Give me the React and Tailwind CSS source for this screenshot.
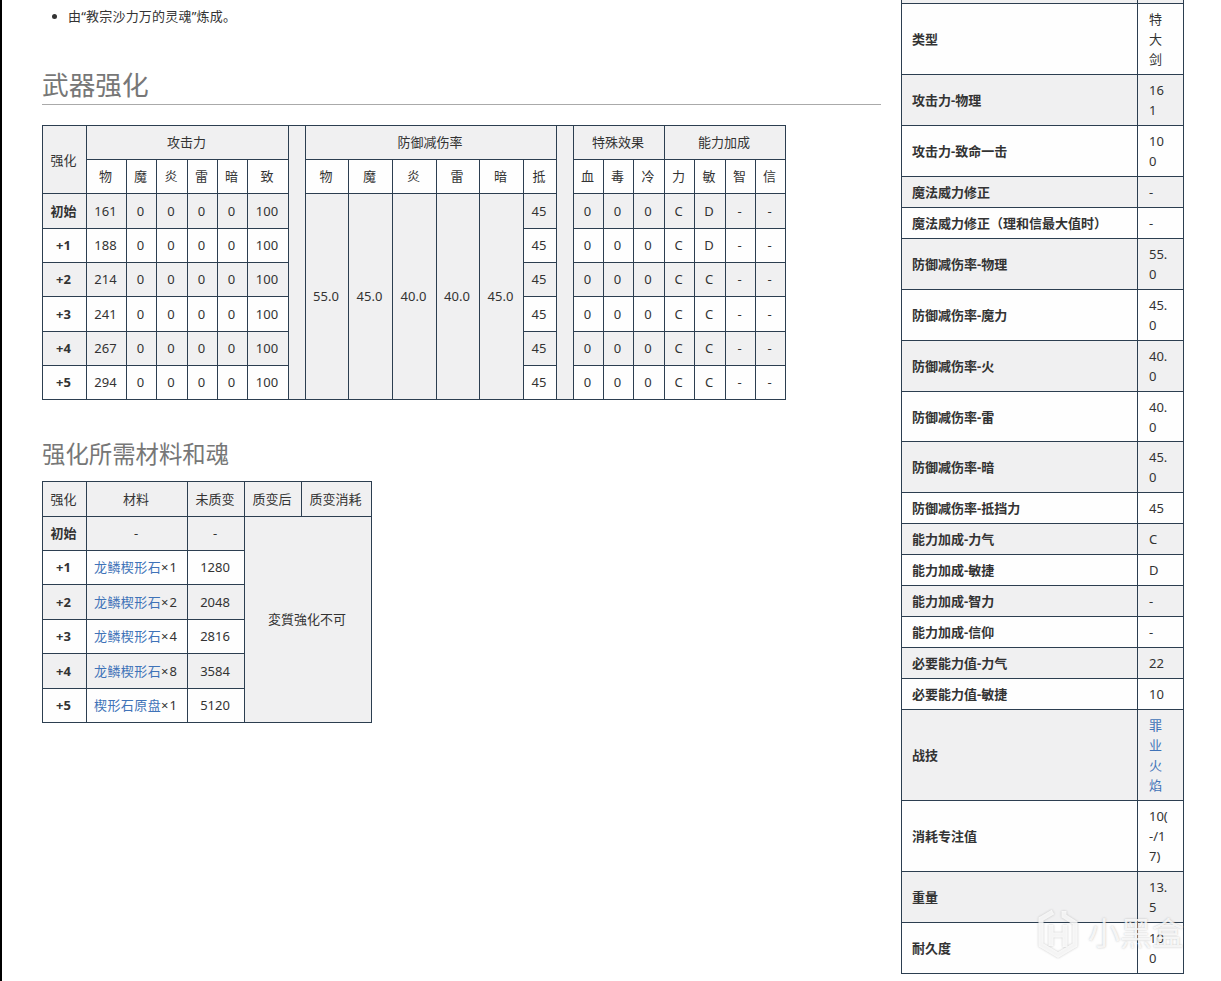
const font = '"Noto Sans", "Noto Sans CJK SC", sans-serif'

const cell = 'border border-[#2c3e50] text-center align-middle pt-0 pl-0 pr-[2px]'
const dataCell = `${cell} pb-px`
const gray = 'bg-[#f0f0f1]'
const white = 'bg-[#fefefe]'

const mainCols = [44, 40, 30, 31, 30, 30, 41, 17, 43, 44, 44, 43, 44, 33, 17, 30, 30, 31, 30, 31, 30, 30]

const upgradeRows = [
  ['初始', 161, 'C', 'D', 'h-[35px]'],
  ['+1', 188, 'C', 'D', 'h-[34px]'],
  ['+2', 214, 'C', 'C', 'h-[34px]'],
  ['+3', 241, 'C', 'C', 'h-[35px]'],
  ['+4', 267, 'C', 'C', 'h-[34px]'],
  ['+5', 294, 'C', 'C', 'h-[34px]'],
]

const materialRows = [
  ['初始', '-', '', '-', 'h-[34px]'],
  ['+1', '龙鳞楔形石', '×1', '1280', 'h-[34px]'],
  ['+2', '龙鳞楔形石', '×2', '2048', 'h-[35px]'],
  ['+3', '龙鳞楔形石', '×4', '2816', 'h-[34px]'],
  ['+4', '龙鳞楔形石', '×8', '3584', 'h-[35px]'],
  ['+5', '楔形石原盘', '×1', '5120', 'h-[34px]'],
]

const infoRows = [
  ['类型', '特大剑'],
  ['攻击力-物理', '161'],
  ['攻击力-致命一击', '100'],
  ['魔法威力修正', '-'],
  ['魔法威力修正（理和信最大值时）', '-'],
  ['防御减伤率-物理', '55.0'],
  ['防御减伤率-魔力', '45.0'],
  ['防御减伤率-火', '40.0'],
  ['防御减伤率-雷', '40.0', false, true],
  ['防御减伤率-暗', '45.0'],
  ['防御减伤率-抵挡力', '45'],
  ['能力加成-力气', 'C'],
  ['能力加成-敏捷', 'D'],
  ['能力加成-智力', '-'],
  ['能力加成-信仰', '-'],
  ['必要能力值-力气', '22'],
  ['必要能力值-敏捷', '10'],
  ['战技', '罪业火焰', true],
  ['消耗专注值', '10(-/17)'],
  ['重量', '13.5'],
  ['耐久度', '100'],
]

function UpgradeTable() {
  return (
    <table className="table-fixed border-collapse w-[743px] text-[13px] leading-5">
      <colgroup>
        {mainCols.map((w, i) => <col key={i} style={{ width: w }} />)}
      </colgroup>
      <tbody>
        <tr className="h-[34px]">
          <td rowSpan={2} className={`${cell} ${gray}`}>强化</td>
          <td colSpan={6} className={`${cell} ${gray} pb-[2px]`}>攻击力</td>
          <td rowSpan={8} className={`${cell} ${gray}`}></td>
          <td colSpan={6} className={`${cell} ${gray} pb-[2px]`}>防御减伤率</td>
          <td rowSpan={8} className={`${cell} ${gray}`}></td>
          <td colSpan={3} className={`${cell} ${gray} pb-[2px]`}>特殊效果</td>
          <td colSpan={4} className={`${cell} ${gray} pb-[2px]`}>能力加成</td>
        </tr>
        <tr className="h-[34px]">
          {['物', '魔', '炎', '雷', '暗', '致'].map(t => <td key={t} className={`${cell} ${white} pb-[2px]`}>{t}</td>)}
          {['物', '魔', '炎', '雷', '暗', '抵'].map(t => <td key={t} className={`${cell} ${white} pb-[2px]`}>{t}</td>)}
          {['血', '毒', '冷', '力', '敏', '智', '信'].map(t => <td key={t} className={`${cell} ${white} pb-[2px]`}>{t}</td>)}
        </tr>
        {upgradeRows.map((row, i) => {
          const bg = i % 2 === 0 ? gray : white
          return (
            <tr key={row[0]} className={row[4]}>
              <td className={`${dataCell} ${bg} font-bold`}>{row[0]}</td>
              <td className={`${dataCell} ${bg}`}>{row[1]}</td>
              {[0, 1, 2, 3].map(k => <td key={k} className={`${dataCell} ${bg}`}>0</td>)}
              <td className={`${dataCell} ${bg}`}>100</td>
              {i === 0 && ['55.0', '45.0', '40.0', '40.0', '45.0'].map((v, k) => (
                <td key={k} rowSpan={6} className={`${dataCell} ${gray}`}>{v}</td>
              ))}
              <td className={`${dataCell} ${bg}`}>45</td>
              {[0, 1, 2].map(k => <td key={k} className={`${dataCell} ${bg}`}>0</td>)}
              <td className={`${dataCell} ${bg}`}>{row[2]}</td>
              <td className={`${dataCell} ${bg}`}>{row[3]}</td>
              <td className={`${dataCell} ${bg}`}>-</td>
              <td className={`${dataCell} ${bg}`}>-</td>
            </tr>
          )
        })}
      </tbody>
    </table>
  )
}

function MaterialTable() {
  return (
    <table className="table-fixed border-collapse w-[329px] text-[13px] leading-5">
      <colgroup>
        <col className="w-[44px]" />
        <col className="w-[101px]" />
        <col className="w-[57px]" />
        <col className="w-[57px]" />
        <col className="w-[70px]" />
      </colgroup>
      <tbody>
        <tr className="h-[35px]">
          {['强化', '材料', '未质变', '质变后', '质变消耗'].map(t => (
            <td key={t} className={`${dataCell} ${gray}`}>{t}</td>
          ))}
        </tr>
        {materialRows.map((row, i) => {
          const bg = i % 2 === 0 ? gray : white
          return (
            <tr key={row[0]} className={row[4]}>
              <td className={`${dataCell} ${bg} font-bold`}>{row[0]}</td>
              <td className={`${dataCell} ${bg}`}>
                {row[2] ? <a className="text-[#3f73b8] tracking-[0.4px]">{row[1]}</a> : row[1]}
                <span className="tracking-[1px]">{row[2]}</span>
              </td>
              <td className={`${dataCell} ${bg}`}>{row[3]}</td>
              {i === 0 && <td rowSpan={6} colSpan={2} className={`${dataCell} ${gray}`}>変質強化不可</td>}
            </tr>
          )
        })}
      </tbody>
    </table>
  )
}

function InfoBox() {
  return (
    <table className="table-fixed border-collapse w-[282px] text-[13px] leading-5">
      <colgroup>
        <col className="w-[236px]" />
        <col className="w-[46px]" />
      </colgroup>
      <tbody>
        <tr className="h-[3px]">
          <td className={`border border-[#2c3e50] border-t-0 p-0 ${gray}`}></td>
          <td className={`border border-[#2c3e50] border-t-0 p-0 ${gray}`}></td>
        </tr>
        {infoRows.map((row, i) => {
          const bg = i % 2 === 1 ? gray : white
          const pad = row[3] ? 'pt-[5px] pb-[4px]' : 'py-[5px]'
          return (
            <tr key={row[0]}>
              <td className={`border border-[#2c3e50] pl-[10px] pr-[11px] ${pad} font-bold ${bg}`}>{row[0]}</td>
              <td className={`border border-[#2c3e50] pl-[11px] pr-[13px] ${pad} break-all [line-break:anywhere] ${bg}`}>
                {row[2] ? <a className="text-[#3f73b8]">{row[1]}</a> : row[1]}
              </td>
            </tr>
          )
        })}
      </tbody>
    </table>
  )
}

function Watermark() {
  return (
    <div className="absolute left-[1037px] top-[908px] flex items-center gap-[9px] pointer-events-none">
      <svg width="42" height="50" viewBox="0 0 42 50" fill="none" stroke="#ffffff" strokeOpacity="0.8" strokeWidth="5" className="drop-shadow-[0_0_1px_rgba(110,110,110,0.45)]">
        <path d="M16 4 L4 11 V37 L21 47 L38 37 V15 L27 8 V3" />
        <path d="M14 17 V38 M14 27 H28 M28 17 V39" />
      </svg>
      <span className="text-[32px] leading-none text-white/80 [text-shadow:0_0_2px_rgba(110,110,110,0.45)]">小黑盒</span>
    </div>
  )
}

export default function App() {
  return (
    <div className="relative flex h-[981px] overflow-hidden bg-white text-[#333]" style={{ fontFamily: font }}>
      <main className="w-[881px] shrink-0 border-l-2 border-black pl-[40px]">
        <ul className="list-disc pl-[26px] pt-[6px] text-[13px] leading-5 tracking-[0.2px]">
          <li>由“教宗沙力万的灵魂”炼成。</li>
        </ul>
        <h2 className="mt-[41px] border-b border-[#aaa] pb-[1px] text-[26.7px] leading-[36px] font-normal text-[#777]">武器强化</h2>
        <div className="mt-[20px]"><UpgradeTable /></div>
        <h3 className="mt-[35px] text-[23.4px] leading-[38px] font-normal text-[#777]">强化所需材料和魂</h3>
        <div className="mt-[8px]"><MaterialTable /></div>
      </main>
      <aside className="ml-[20px] w-[282px] shrink-0">
        <InfoBox />
      </aside>
      <Watermark />
    </div>
  )
}
